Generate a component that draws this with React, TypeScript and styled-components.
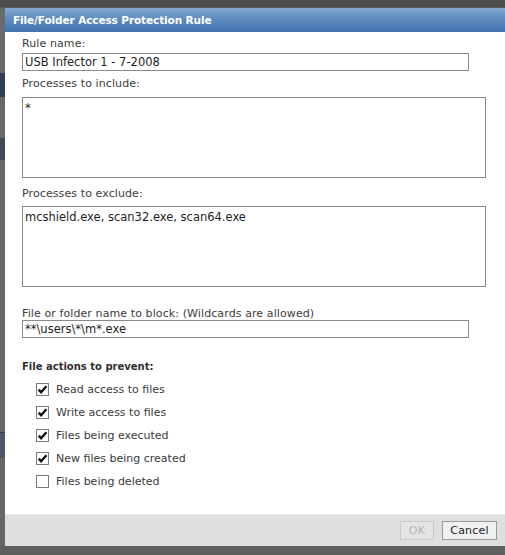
import React from "react";
import styled, { createGlobalStyle } from "styled-components";

const GlobalStyle = createGlobalStyle`
  html, body {
    margin: 0;
    padding: 0;
    background: #606060;
    overflow: hidden;
  }
  body {
    font-family: "DejaVu Sans", Verdana, sans-serif;
  }
`;

const Screen = styled.div`
  width: 505px;
  height: 555px;
  display: flex;
  flex-direction: column;
  background: #606060;
`;

const TopShade = styled.div`
  height: 7px;
  background: #4c4c4c;
  border-bottom: 1px solid #5a5a5a;
`;

const BottomShade = styled.div`
  flex: 1;
  background: #5f5f5f;
`;

const Stage = styled.div`
  display: flex;
  height: 538px;
`;

/* Sliver of the page lying behind the modal */
const Backdrop = styled.div`
  width: 5px;
  display: flex;
  flex-direction: column;
  background: #666;
`;

const BackdropBlock = styled.div<{ $h: number; $c: string }>`
  height: ${(p) => p.$h}px;
  background: ${(p) => p.$c};
  flex-shrink: 0;
`;

const Dialog = styled.div`
  flex: 1;
  display: flex;
  flex-direction: column;
  background: #fff;
`;

const TitleBar = styled.div`
  height: 24px;
  padding-left: 8px;
  background: linear-gradient(#84a8d1, #5f8cc0 45%, #3f73ae);
  color: #fff;
  font-weight: bold;
  font-size: 10.5px;
  letter-spacing: -0.1px;
  line-height: 25px;
`;

const Body = styled.div`
  flex: 1;
  padding: 5px 17px 0;
  display: flex;
  flex-direction: column;
`;

const Label = styled.div<{ $top: number; $bottom: number }>`
  margin-top: ${(p) => p.$top}px;
  margin-bottom: ${(p) => p.$bottom}px;
  font-size: 11px;
  line-height: 13px;
  color: #3c3c3c;
  letter-spacing: 0.1px;
`;

const TextBox = styled.div<{ $w: number }>`
  box-sizing: border-box;
  width: ${(p) => p.$w}px;
  height: 18px;
  border: 1px solid #8a8a8a;
  padding: 0 2px;
  font-size: 11.5px;
  line-height: 17px;
  color: #1e1e1e;
  white-space: nowrap;
`;

const TextArea = styled.div`
  box-sizing: border-box;
  width: 464px;
  height: 81px;
  border: 1px solid #8a8a8a;
  padding: 3px 2px;
  font-size: 11.5px;
  line-height: 15px;
  color: #1e1e1e;
`;

const SectionTitle = styled.div`
  margin-top: 22px;
  font-size: 10px;
  font-weight: bold;
  line-height: 13px;
  color: #2e2e2e;
`;

const OptionList = styled.div`
  margin-top: 5px;
  padding-left: 14px;
  display: flex;
  flex-direction: column;
`;

const Option = styled.div`
  height: 23px;
  display: flex;
  align-items: center;
  gap: 7px;
  font-size: 11px;
  color: #3a3a3a;
`;

const Box = styled.span`
  box-sizing: border-box;
  width: 13px;
  height: 13px;
  border: 1px solid #7a7a7a;
  background: #fff;
  display: inline-flex;
  align-items: center;
  justify-content: center;
`;

const ButtonBar = styled.div`
  height: 32px;
  box-sizing: border-box;
  border-top: 1px solid #ebebeb;
  background: #dfdfdf;
  display: flex;
  justify-content: flex-end;
  align-items: center;
  gap: 8px;
  padding: 0 8px 1px 0;
`;

const Button = styled.div<{ $disabled?: boolean; $w: number }>`
  box-sizing: border-box;
  width: ${(p) => p.$w}px;
  height: 19px;
  border: 1px solid ${(p) => (p.$disabled ? "#c9c9c9" : "#9a9a9a")};
  background: ${(p) => (p.$disabled ? "#e4e4e4" : "#f1f1f1")};
  color: ${(p) => (p.$disabled ? "#b4b4b4" : "#222")};
  font-size: 11px;
  line-height: 17px;
  text-align: center;
  letter-spacing: 0.2px;
`;

const Check = ({ on }: { on: boolean }) => (
  <Box>
    {on && (
      <svg width="11" height="11" viewBox="0 0 11 11">
        <path
          d="M1.6 5.6 L4.1 8.2 L9.4 2.2"
          fill="none"
          stroke="#111"
          strokeWidth="2.4"
          strokeLinejoin="miter"
        />
      </svg>
    )}
  </Box>
);

const actions = [
  { label: "Read access to files", on: true },
  { label: "Write access to files", on: true },
  { label: "Files being executed", on: true },
  { label: "New files being created", on: true },
  { label: "Files being deleted", on: false },
];

const backdrop: [number, string][] = [
  [65, "#6a6a6a"],
  [24, "#2f3e54"],
  [41, "#686868"],
  [22, "#3e4a5a"],
  [272, "#676767"],
  [1, "#3a3a3a"],
  [25, "#4c5769"],
  [88, "#666666"],
];

export default function App() {
  return (
    <>
      <GlobalStyle />
      <Screen>
        <TopShade />
        <Stage>
          <Backdrop>
            {backdrop.map(([h, c], i) => (
              <BackdropBlock key={i} $h={h} $c={c} />
            ))}
          </Backdrop>
          <Dialog>
            <TitleBar>File/Folder Access Protection Rule</TitleBar>
            <Body>
              <Label $top={0} $bottom={3}>Rule name:</Label>
              <TextBox $w={447}>USB Infector 1 - 7-2008</TextBox>

              <Label $top={6} $bottom={7}>Processes to include:</Label>
              <TextArea>*</TextArea>

              <Label $top={9} $bottom={6}>Processes to exclude:</Label>
              <TextArea>mcshield.exe, scan32.exe, scan64.exe</TextArea>

              <Label $top={20} $bottom={0}>
                File or folder name to block: (Wildcards are allowed)
              </Label>
              <TextBox $w={447}>**\users\*\m*.exe</TextBox>

              <SectionTitle>File actions to prevent:</SectionTitle>
              <OptionList>
                {actions.map((a) => (
                  <Option key={a.label}>
                    <Check on={a.on} />
                    {a.label}
                  </Option>
                ))}
              </OptionList>
            </Body>
            <ButtonBar>
              <Button $disabled $w={34}>OK</Button>
              <Button $w={55}>Cancel</Button>
            </ButtonBar>
          </Dialog>
        </Stage>
        <BottomShade />
      </Screen>
    </>
  );
}
